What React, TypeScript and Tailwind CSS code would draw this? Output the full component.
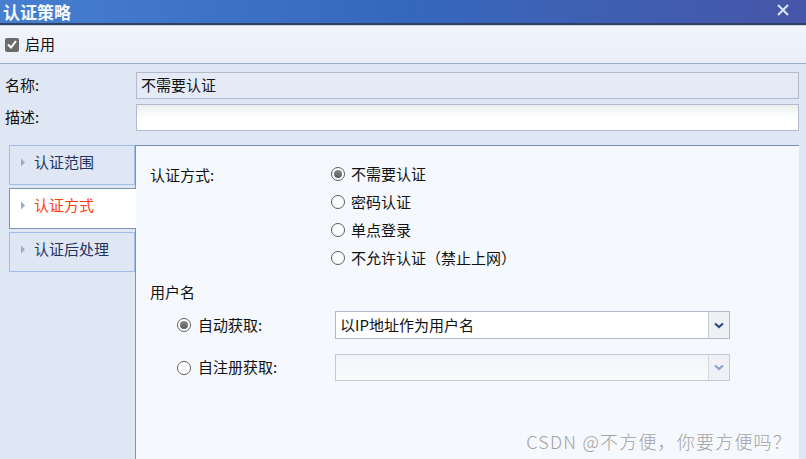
import React from "react";

const font = { fontFamily: '"Noto Sans CJK SC", "Microsoft YaHei", sans-serif' };

function Radio({ checked }: { checked?: boolean }) {
  return (
    <span className="flex h-[14px] w-[14px] shrink-0 items-center justify-center rounded-full border border-[#5c5c5c] bg-white">
      {checked && <span className="h-[8px] w-[8px] rounded-full bg-gradient-to-b from-[#8a8a8a] to-[#5a5a5a]" />}
    </span>
  );
}

function Chevron({ color }: { color: string }) {
  return (
    <svg width="10" height="7" viewBox="0 0 10 7">
      <path d="M1 1.5 L5 5 L9 1.5" fill="none" stroke={color} strokeWidth="2.2" />
    </svg>
  );
}

function Tab({ label, active }: { label: string; active?: boolean }) {
  return (
    <div
      className={
        active
          ? "relative z-10 -mr-px flex h-[41px] items-center border-y border-l border-[#7b91b6] bg-white pb-[6px] pl-[10px]"
          : "flex h-[40px] items-center border border-[#9dbfea] pb-[6px] pl-[10px]"
      }
    >
      <svg width="6" height="9" viewBox="0 0 6 9" className="mr-[8px]">
        <path d="M1 0.5 L5 4.5 L1 8.5 Z" fill="#9aabc6" />
      </svg>
      <span className={active ? "text-[15px] text-[#ff3b12]" : "text-[15px] text-[#1d3560]"}>{label}</span>
    </div>
  );
}

export default function App() {
  return (
    <div className="relative flex h-[459px] w-[806px] flex-col overflow-hidden bg-[#dfe7f5] text-[#111]" style={font}>
      {/* title bar */}
      <div className="relative flex h-[23px] shrink-0 items-center justify-between bg-gradient-to-r from-[#477fd0] via-[#3468bd] to-[#4656a8] pl-[3px] pr-[16px]">
        <span className="-mt-[1px] text-[17px] font-bold leading-none text-[#f4f7fc]">认证策略</span>
        <svg width="14" height="14" viewBox="0 0 14 14" className="-mt-[4px]">
          <path d="M2 2 L12 12 M12 2 L2 12" stroke="#dfe5f2" strokeWidth="2" />
        </svg>
      </div>
      <div className="h-[2px] shrink-0 bg-[#2f3f66]" />
      <div className="h-[1px] shrink-0 bg-[#c9d4e8]" />
      {/* toolbar */}
      <div className="flex h-[38px] shrink-0 items-center border-b border-[#9aaecb] bg-gradient-to-b from-[#f1f4fb] to-[#e9eef8] pl-[5px]">
        <span className="flex h-[14px] w-[14px] items-center justify-center rounded-[2px] bg-[#6b6b6b]">
          <svg width="10" height="9" viewBox="0 0 10 9">
            <path d="M1 4.5 L4 7.5 L9 1" fill="none" stroke="white" strokeWidth="2" />
          </svg>
        </span>
        <span className="ml-[6px] text-[15px]">启用</span>
      </div>
      {/* form */}
      <div className="flex shrink-0 flex-col gap-[5px] pt-[8px] pr-[7px]">
        <div className="flex h-[27px] items-center">
          <span className="w-[136px] pl-[5px] text-[15px]">名称:</span>
          <div className="flex h-[27px] flex-1 items-center border border-[#b3bacb] bg-[#e4ebf7] pl-[4px] text-[15px]">不需要认证</div>
        </div>
        <div className="flex h-[27px] items-center">
          <span className="w-[136px] pl-[5px] text-[15px]">描述:</span>
          <div className="h-[27px] flex-1 border border-[#b3bacb] bg-gradient-to-b from-[#eceeee] via-white to-white" />
        </div>
      </div>
      {/* main */}
      <div className="mt-[14px] flex min-h-0 flex-1 pl-[9px] pr-[7px]">
        <div className="flex w-[126px] shrink-0 flex-col gap-[3px]">
          <Tab label="认证范围" />
          <Tab label="认证方式" active />
          <Tab label="认证后处理" />
        </div>
        <div className="flex-1 border-l border-t border-[#7b91b6] bg-[#f5f8fc] pl-[14px] pt-[14px]">
          <div className="flex">
            <span className="w-[181px] pt-[1px] text-[15px] leading-[28px]">认证方式:</span>
            <div className="flex flex-col">
              {[
                ["不需要认证", true],
                ["密码认证", false],
                ["单点登录", false],
                ["不允许认证（禁止上网）", false],
              ].map(([t, c]) => (
                <div key={t as string} className="flex h-[28px] items-center gap-[6px]">
                  <Radio checked={c as boolean} />
                  <span className="text-[15px]">{t as string}</span>
                </div>
              ))}
            </div>
          </div>
          <div className="mt-[6px] text-[15px] leading-[28px]">用户名</div>
          <div className="mt-[5px] flex h-[28px] items-center pl-[27px]">
            <Radio checked />
            <span className="ml-[7px] w-[137px] text-[15px]">自动获取:</span>
            <div className="flex h-[28px] w-[395px] items-center border border-[#b3bacb] bg-white">
              <span className="flex-1 pl-[4px] text-[15px]">以IP地址作为用户名</span>
              <span className="flex h-full w-[21px] items-center justify-center border-l border-[#c8ccd6] bg-[#eef0f4]">
                <Chevron color="#2a4a86" />
              </span>
            </div>
          </div>
          <div className="mt-[15px] flex h-[27px] items-center pl-[27px]">
            <Radio />
            <span className="ml-[7px] w-[137px] text-[15px]">自注册获取:</span>
            <div className="flex h-[27px] w-[395px] items-center border border-[#c3c8d4] bg-gradient-to-b from-[#f3f4f7] to-[#f9fafc]">
              <span className="flex-1" />
              <span className="flex h-full w-[21px] items-center justify-center border-l border-[#d2d6de] bg-[#eff1f4]">
                <Chevron color="#8da2c8" />
              </span>
            </div>
          </div>
        </div>
      </div>
      <div className="absolute right-[14px] top-[428px] text-[18px] font-light tracking-[1.2px] text-[#a2a2a2]" style={{ fontFamily: '"Noto Sans CJK SC", sans-serif' }}>
        CSDN @不方便，你要方便吗？
      </div>
    </div>
  );
}
